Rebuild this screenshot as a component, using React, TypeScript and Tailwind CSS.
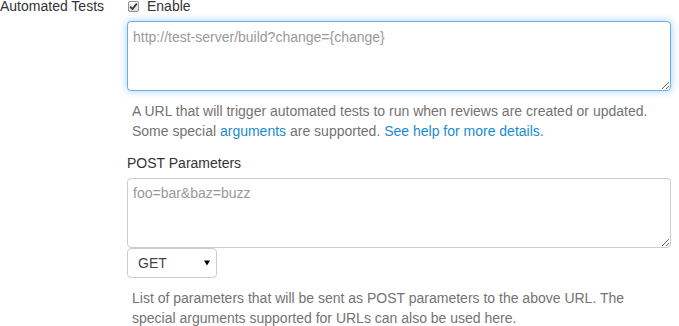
import React from "react";

export default function App() {
  const font = { fontFamily: '"Liberation Sans", Arial, sans-serif' };
  return (
    <div className="w-[679px] h-[326px] overflow-hidden bg-white text-[14px] leading-[20px] text-[#333]" style={font}>
      <div className="flex mt-[-4px]">
        <div className="w-[127px] shrink-0">Automated Tests</div>
        <div className="flex flex-col w-[544px]">
          <div className="flex items-center h-[20px]">
            <span className="ml-[1px] w-[11px] h-[11px] rounded-[2px] border border-[#8f8f8f] bg-gradient-to-b from-[#fdfdfd] to-[#dcdcdc] flex items-center justify-center">
              <svg width="9" height="9" viewBox="0 0 9 9">
                <path d="M1.2 4.6 L3.5 7 L7.8 1.6" fill="none" stroke="#333" strokeWidth="1.8" strokeLinejoin="round" />
              </svg>
            </span>
            <span className="ml-[8px]">Enable</span>
          </div>
          <textarea
            autoFocus
            className="mt-[5px] w-[544px] h-[70px] rounded-[4px] border border-[#66afe9] shadow-[0_0_8px_rgba(102,175,233,0.6)] outline-none px-[5px] pt-[5px] placeholder:text-[#999] text-[#555] resize-y bg-white"
            placeholder="http://test-server/build?change={change}"
            style={font}
          />
          <div className="mt-[10px] pl-[5px] text-[#737373]">
            A URL that will trigger automated tests to run when reviews are created or updated.
            <br />
            Some special <a className="text-[#1a8bd2]">arguments</a> are supported.{" "}
            <a className="text-[#1a8bd2]">See help for more details.</a>
          </div>
          <div className="mt-[12px]">POST Parameters</div>
          <textarea
            className="mt-[5px] w-[544px] h-[70px] rounded-[4px] border border-[#ccc] outline-none px-[5px] pt-[4px] placeholder:text-[#999] text-[#555] resize-y bg-white"
            placeholder="foo=bar&baz=buzz"
            style={font}
          />
          <div className="w-[90px] h-[30px] rounded-[4px] border border-[#ccc] bg-white flex items-center justify-between pl-[10px] pr-[6px] text-[#444]">
            <span>GET</span>
            <svg width="6" height="6" viewBox="0 0 6 6">
              <path d="M0 0.5 L6 0.5 L3 5.5 Z" fill="#000" />
            </svg>
          </div>
          <div className="mt-[10px] pl-[5px] text-[#737373]">
            List of parameters that will be sent as POST parameters to the above URL. The
            <br />
            special arguments supported for URLs can also be used here.
          </div>
        </div>
      </div>
    </div>
  );
}
